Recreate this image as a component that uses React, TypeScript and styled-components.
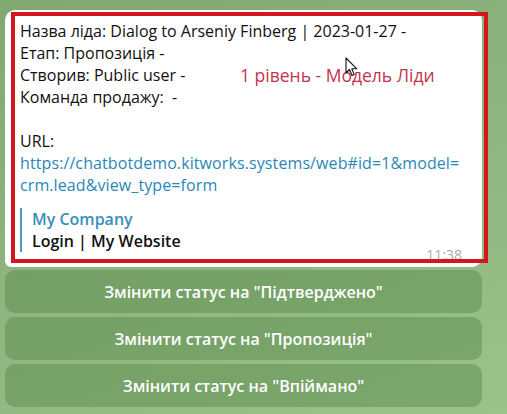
import React from 'react';
import styled, {createGlobalStyle} from 'styled-components';

const GlobalStyle = createGlobalStyle`
  body {
    margin: 0;
    font-family: 'Open Sans', 'Noto Sans', sans-serif;
  }
`;

const buttons = ['Змінити статус на "Підтверджено"', 'Змінити статус на "Пропозиція"', 'Змінити статус на "Впіймано"'];

const Cursor = () => (
  <CursorIcon width="14" height="21" viewBox="0 0 14 21">
    <path d="M1 1 L1 16 L4.5 12.5 L7 18.5 L9.2 17.6 L6.8 11.8 L11.8 11.8 Z" fill="#fff" stroke="#111" strokeWidth="1.1" strokeLinejoin="round" />
  </CursorIcon>
);

const App = () => {
  return (
    <Page>
      <GlobalStyle />
      <Bubble>
        <Line>Назва ліда: Dialog to Arseniy Finberg | 2023-01-27 -</Line>
        <Line>Етап: Пропозиція -</Line>
        <Line>Створив: Public user -</Line>
        <Line>Команда продажу:&nbsp; -</Line>
        <Line>&nbsp;</Line>
        <Line>URL:</Line>
        <Link>https://chatbotdemo.kitworks.systems/web#id=1&amp;model=</Link>
        <Link>crm.lead&amp;view_type=form</Link>
        <Quote>
          <QuoteTitle>My Company</QuoteTitle>
          <QuoteText>Login | My Website</QuoteText>
        </Quote>
        <Time>11:38</Time>
        <Highlight />
        <Note>1 рівень - Модель Ліди</Note>
        <Cursor />
      </Bubble>
      <Keyboard>
        {buttons.map(label => (
          <KeyButton key={label}>{label}</KeyButton>
        ))}
      </Keyboard>
    </Page>
  );
};

export default App;

const Page = styled.div`
  width: 507px;
  height: 414px;
  box-sizing: border-box;
  padding: 10px 25px 0 5px;
  overflow: hidden;
  display: flex;
  flex-direction: column;
  background: linear-gradient(160deg, #82a872 0%, #8db37e 45%, #9ac38b 100%);
`;

const Bubble = styled.div`
  position: relative;
  height: 257px;
  box-sizing: border-box;
  padding: 10px 15px 0 15px;
  background: #fff;
  border-radius: 10px 10px 10px 6px;
  font-size: 16px;
  line-height: 22px;
  color: #111;
`;

const Line = styled.div`
  white-space: nowrap;
`;

const Link = styled.div`
  color: #2b87b7;
  white-space: nowrap;
  letter-spacing: 0.1px;
`;

const Quote = styled.div`
  margin-top: 12px;
  padding-left: 10px;
  border-left: 2px solid #4b97c0;
  font-weight: 600;
`;

const QuoteTitle = styled.div`
  color: #3a8dba;
`;

const QuoteText = styled.div`
  color: #111;
`;

const Time = styled.span`
  position: absolute;
  right: 20px;
  bottom: 3px;
  font-size: 14px;
  line-height: 18px;
  color: #a3adb5;
`;

const Highlight = styled.div`
  position: absolute;
  left: 6px;
  top: 2px;
  width: 477px;
  height: 251px;
  box-sizing: border-box;
  border: 4px solid #d4161d;
  pointer-events: none;
`;

const Note = styled.span`
  position: absolute;
  left: 235px;
  top: 54px;
  font-size: 17.5px;
  line-height: 22px;
  color: #c2364b;
  white-space: nowrap;
`;

const CursorIcon = styled.svg`
  position: absolute;
  left: 340px;
  top: 47px;
`;

const Keyboard = styled.div`
  display: flex;
  flex-direction: column;
  gap: 4px;
  margin-top: 3px;
`;

const KeyButton = styled.div`
  height: 43px;
  display: flex;
  align-items: center;
  justify-content: center;
  border-radius: 10px;
  background: rgba(92, 140, 78, 0.5);
  color: #fff;
  font-size: 16px;
  font-weight: 600;
`;
